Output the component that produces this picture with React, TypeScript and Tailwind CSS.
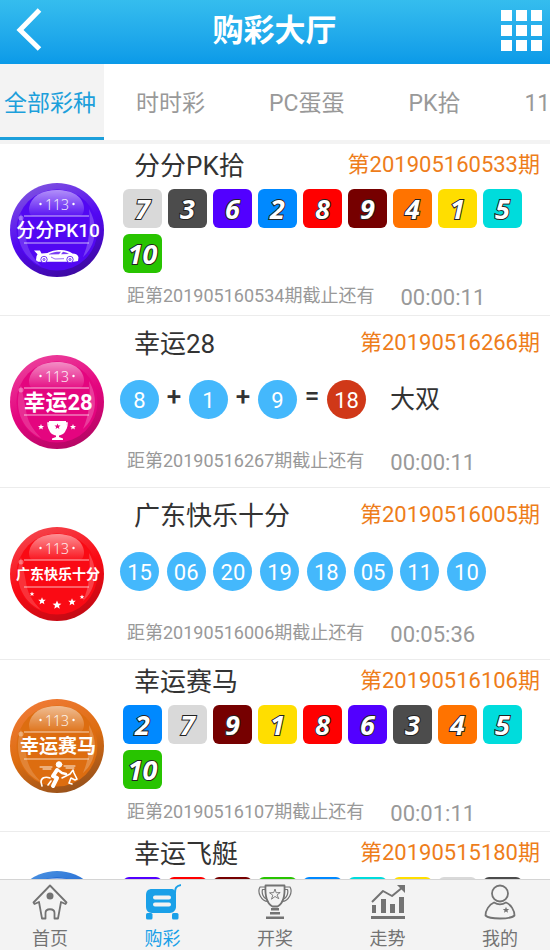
import React from 'react';

type Draw =
  | { kind: 'tiles'; numbers: number[] }
  | { kind: 'sum'; parts: string[]; total: string; result: string }
  | { kind: 'balls'; numbers: string[] };

type Theme = 'purple' | 'pink' | 'red' | 'orange' | 'blue';

interface Lottery {
  name: string;
  theme: Theme;
  badgeSize: number;
  issue: string;
  next: string;
  time: string;
  draw: Draw;
}

const lotteries: Lottery[] = [
  { name: '分分PK拾', theme: 'purple', badgeSize: 19, issue: '201905160533', next: '201905160534', time: '00:00:11', draw: { kind: 'tiles', numbers: [7, 3, 6, 2, 8, 9, 4, 1, 5, 10] } },
  { name: '幸运28', theme: 'pink', badgeSize: 22, issue: '20190516266', next: '20190516267', time: '00:00:11', draw: { kind: 'sum', parts: ['8', '1', '9'], total: '18', result: '大双' } },
  { name: '广东快乐十分', theme: 'red', badgeSize: 14, issue: '20190516005', next: '20190516006', time: '00:05:36', draw: { kind: 'balls', numbers: ['15', '06', '20', '19', '18', '05', '11', '10'] } },
  { name: '幸运赛马', theme: 'orange', badgeSize: 19, issue: '20190516106', next: '20190516107', time: '00:01:11', draw: { kind: 'tiles', numbers: [2, 7, 9, 1, 8, 6, 3, 4, 5, 10] } },
  { name: '幸运飞艇', theme: 'blue', badgeSize: 19, issue: '20190515180', next: '20190515181', time: '00:01:11', draw: { kind: 'tiles', numbers: [6, 8, 9, 10, 2, 5, 1, 7, 3, 4] } },
];

const tileColors: Record<number, string> = {
  1: 'bg-[#ffde00]',
  2: 'bg-[#0089ff]',
  3: 'bg-[#4c4c4c]',
  4: 'bg-[#ff7300]',
  5: 'bg-[#00dcdc]',
  6: 'bg-[#5200ff]',
  7: 'bg-[#d9d9d9]',
  8: 'bg-[#ff0000]',
  9: 'bg-[#760000]',
  10: 'bg-[#28c400]',
};

const themes: Record<Theme, { light: string; base: string; dark: string }> = {
  purple: { light: '#7f52e0', base: '#5208f2', dark: '#3c0a9c' },
  pink: { light: '#ec3f9c', base: '#e4057f', dark: '#b30763' },
  red: { light: '#f5444c', base: '#fa0a14', dark: '#c00a14' },
  orange: { light: '#ef7a35', base: '#dd6d10', dark: '#94501c' },
  blue: { light: '#4a90e0', base: '#0a55cc', dark: '#08409c' },
};

const star = 'M0-4 1.1-1.3 4-1.2 1.8.6 2.5 3.4 0 1.8-2.5 3.4-1.8.6-4-1.2-1.1-1.3Z';

function Emblem({ theme }: { theme: Theme }) {
  if (theme === 'purple') {
    return (
      <g>
        <path fill="#fff" d="M24 67.500h6l1.500 3 6-.5c4-2 7-3 13-3 5 0 9 1.500 12 3.500 4 .5 5.500 1.500 6 4l-.5 3.500-4 .800H28l-2-1.500.500-4 1-2Z" />
        <path d="M39 71c4-2 8-2.500 12-2.300l-2 2.500-10 .3Zm14-2.200c3 .4 5 1.600 6 2.200l-8 .3Z" fill="#7a3df5" />
        <g fill="#fff" stroke="#5208f2" strokeWidth="0.800">
          <circle cx="34" cy="76.500" r="3.200" /><circle cx="60" cy="76.500" r="3.200" />
          <circle cx="34" cy="76.500" r="1" /><circle cx="60" cy="76.500" r="1" />
        </g>
        <path d="M41 74l4 2 9-.3" fill="none" stroke="#5208f2" strokeWidth="0.600" />
      </g>
    );
  }
  if (theme === 'pink') {
    return (
      <g fill="#fff">
        <path d="M39 66h17v7c0 5-4 7-7 7.500V82l4 1.500V85H42v-1.500l4-1.500v-1.500c-3-.5-7-2.500-7-7.500Z" />
        <path d="M40 68h-2c0 4 1 7 4 8m13-8h2c0 4-1 7-4 8" fill="none" stroke="#fff" strokeWidth="1.500" />
        <path d={star} transform="translate(31 72) scale(.75)" />
        <path d={star} transform="translate(63 72) scale(.75)" />
        <path d={star} fill="#e4057f" transform="translate(47.500 71.500) scale(.75)" />
      </g>
    );
  }
  if (theme === 'red') {
    return (
      <g fill="#fff">
        <path d={star} transform="translate(22 67) scale(.6)" />
        <path d={star} transform="translate(32 74) scale(.95)" />
        <path d={star} transform="translate(47 78) scale(1.1)" />
        <path d={star} transform="translate(62 75) scale(.95)" />
        <path d={star} transform="translate(72 70) scale(.6)" />
      </g>
    );
  }
  return (
    <g fill="none" stroke="#fff" strokeLinecap="round" strokeLinejoin="round">
      <circle cx="49" cy="65.500" r="2.800" fill="#fff" />
      <path d="M47 71l-4 6M43 77l4 2-4 8" strokeWidth="4" />
      <path d="M48 71l4 3 4 1" strokeWidth="2.500" />
      <path d="M40 79c-5-2-9 0-9 4l1 4m9-5-3 4m14-7 8-4 3-4 1 3 3 6-2 1-4-2-2 5 3 1" strokeWidth="1.600" />
      <path d="M30 68h12m-9 2h8m13-3h11m-9 2h8" strokeWidth="0.900" />
    </g>
  );
}

function Badge({ lottery }: { lottery: Lottery }) {
  const { theme, badgeSize } = lottery;
  const c = themes[theme];
  const label = lottery.name.replace('拾', '10');
  return (
    <svg viewBox="0 0 94 94" className="size-[94px] shrink-0" role="img" aria-label={label}>
      <defs>
        <linearGradient id={`rim-${theme}`} x1="0.300" y1="0" x2="0.700" y2="1">
          <stop offset="0" stopColor={c.light} />
          <stop offset="0.500" stopColor={c.base} />
          <stop offset="1" stopColor={c.dark} />
        </linearGradient>
        <linearGradient id={`shine-${theme}`} x1="0" y1="0" x2="0" y2="1">
          <stop offset="0" stopColor="#fff" stopOpacity="0.550" />
          <stop offset="1" stopColor="#fff" stopOpacity="0.050" />
        </linearGradient>
      </defs>
      <circle cx="47" cy="47" r="47" fill={`url(#rim-${theme})`} />
      <circle cx="47" cy="47" r="40.500" fill={c.base} />
      <path d="M11 30c-8 22 0 44 20 53-9-9-14-18-15-28Z" fill="#fff" opacity="0.160" />
      <path d="M79 26c10 17 7 37-6 48 6-14 8-30 6-48Z" fill="#fff" opacity="0.220" />
      <path d="M19 25C21 13 32 7 47 7s26 6 27 18c0 5-2 8-5 8H24c-4 0-5-3-5-8Z" fill={`url(#shine-${theme})`} />
      <circle cx="11" cy="35" r="2.500" fill="#fff" opacity="0.350" />
      <path d="M14 33h65M14 60h65" stroke="#fff" strokeWidth="0.900" opacity="0.800" />
      <text x="47" y="27" textAnchor="middle" fontSize="14" fill="#fff" opacity="0.900" className="font-['Noto_Sans',sans-serif] font-light">113</text>
      <circle cx="30.500" cy="21" r="1.200" fill="#fff" /><circle cx="63.500" cy="21" r="1.200" fill="#fff" />
      <text x="48" y={47 + badgeSize * 0.36} textAnchor="middle" fontSize={badgeSize} fill="#fff" className={`font-['Roboto','Noto_Sans_CJK_SC',sans-serif] ${theme === 'purple' ? 'font-medium' : 'font-bold'}`}>{label}</text>
      <Emblem theme={theme} />
    </svg>
  );
}

function Ball({ value, red = false }: { value: string; red?: boolean }) {
  return (
    <span className={`flex size-[39px] items-center justify-center rounded-full pt-0.5 text-[22px] leading-none text-white ${red ? 'bg-[#d03818]' : 'bg-[#44b8fc]'}`}>
      {value}
    </span>
  );
}

function DrawResult({ draw }: { draw: Draw }) {
  if (draw.kind === 'tiles') {
    return (
      <div className="mt-[5px] mb-[9px] flex flex-wrap gap-[6px] pl-[3px]">
        {draw.numbers.map((n) => (
          <span
            key={n}
            className={`flex size-[39px] items-center justify-center rounded-[6px] font-['Open_Sans',sans-serif] text-[27px] leading-none font-bold text-white italic [paint-order:stroke_fill] [-webkit-text-stroke:2px_#222] ${tileColors[n]}`}
          >
            {n}
          </span>
        ))}
      </div>
    );
  }
  if (draw.kind === 'balls') {
    return (
      <div className="mt-[18px] mb-[28px] flex max-w-[366px] justify-between">
        {draw.numbers.map((n) => (
          <Ball key={n} value={n} />
        ))}
      </div>
    );
  }
  return (
    <div className="mt-[18px] mb-[28px] flex items-center text-[#333]">
      {draw.parts.map((n, i) => (
        <React.Fragment key={n}>
          <Ball value={n} />
          <span className="w-[30px] pb-2 text-center text-[26px] leading-none font-medium">{i < draw.parts.length - 1 ? '+' : '='}</span>
        </React.Fragment>
      ))}
      <Ball value={draw.total} red />
      <span className="ml-6 text-[25px] leading-none">{draw.result}</span>
    </div>
  );
}

function LotteryRow({ lottery }: { lottery: Lottery }) {
  return (
    <li className="flex min-h-[172px] shrink-0 items-center gap-4 border-b border-[#ececec] pl-[10px]">
      <Badge lottery={lottery} />
      <div className="min-w-0 flex-1 pb-0.5">
        <div className="flex h-9 items-center justify-between pr-[10px] pl-[14px]">
          <h2 className="text-[26px] leading-9 text-[#333]">{lottery.name}</h2>
          <span className="pb-0.5 text-[22px] leading-8 text-[#ee7d1a]">第{lottery.issue}期</span>
        </div>
        <DrawResult draw={lottery.draw} />
        <p className="flex h-7 items-center gap-[26px] pl-[7px] text-[#999]">
          <span className="text-[18px] leading-7">距第{lottery.next}期截止还有</span>
          <time className="pt-1 text-[22px] leading-7">{lottery.time}</time>
        </p>
      </div>
    </li>
  );
}

const tabs = ['时时彩', 'PC蛋蛋', 'PK拾', '11选5'];

const iconProps = {
  viewBox: '0 0 36 36',
  className: 'size-9',
  fill: 'none',
  stroke: 'currentColor',
  strokeWidth: 1.8,
  strokeLinejoin: 'round' as const,
  'aria-hidden': true,
};

const navItems = [
  {
    label: '首页',
    icon: (
      <svg {...iconProps}>
        <path d="M18 1.500 34.500 18.500l-1 1.500-4.500-2-3 16.500h-3.500V29c0-5-9-5-9 0v5.500H10L7 18l-4.500 2-1-1.500Z" />
        <circle cx="18" cy="12" r="3.500" fill="currentColor" stroke="none" />
      </svg>
    ),
  },
  {
    label: '购彩',
    icon: (
      <svg {...iconProps}>
        <path d="M7 5h19c3 0 5 2 5 5v13c0 3-3 6-6 6H7c-4 0-6-3-6-6V11c0-4 2-6 6-6Z" fill="currentColor" stroke="none" />
        <path d="M30 9c0-5 1-7 6-8" strokeWidth="2" />
        <path d="M10 13.500h14M10 20.500h14" stroke="#f3f3f3" strokeWidth="4" strokeLinecap="round" />
        <rect x="1" y="29" width="6.500" height="6.500" rx="1.500" fill="currentColor" stroke="none" />
        <rect x="27" y="29" width="6.500" height="6.500" rx="1.500" fill="currentColor" stroke="none" />
      </svg>
    ),
  },
  {
    label: '开奖',
    icon: (
      <svg {...iconProps}>
        <path d="M8.500 1.500h19c.5 9-1 18-7 21h-5c-6-3-7.500-12-7-21Z" />
        <path d="M8.500 3H3c-3 5 1 14 8 14.500l-1-2C6 14 4.500 9 5.500 5.500h3M27.500 3H33c3 5-1 14-8 14.500l1-2c4-1.500 5.500-6.500 4.500-10h-3" strokeWidth="1.200" />
        <path d="m18 5 1.200 3.800 4-.3-3.200 2.500 1.800 3.700L18 12.500l-3.500 2.700 1.300-4-3.300-2.400 4.200-.2Z" strokeWidth="0.900" />
        <path d="M14 24h8v2.500h-8ZM13 28h10v2.500H13ZM9 32.500h18V35H9Z" fill="currentColor" stroke="none" />
      </svg>
    ),
  },
  {
    label: '走势',
    icon: (
      <svg {...iconProps}>
        <path d="M2 18 13 7l9 5L33 3" strokeWidth="2" />
        <path d="M27 1h8v8Z" fill="currentColor" stroke="none" />
        <path d="M2 21h4v8H2Zm9-6h5v14h-5Zm9 5h5v9h-5Zm9-7h5v16h-5ZM1 32h34v3H1Z" fill="currentColor" stroke="none" />
      </svg>
    ),
  },
  {
    label: '我的',
    icon: (
      <svg {...iconProps}>
        <circle cx="18" cy="9.500" r="8" />
        <path d="M12 18.500c-5 2-8.500 8-8.500 13 4 4 25 4 29 0 0-5-3.500-11-8.500-13-4 2.500-8 2.500-12 0Z" />
        <path d={star} transform="translate(24 26) scale(.8)" fill="currentColor" stroke="none" />
      </svg>
    ),
  },
];

export default function App() {
  return (
    <div className="flex h-screen flex-col overflow-hidden bg-white font-['Roboto','Noto_Sans_CJK_SC',sans-serif]">
      <header className="flex h-16 shrink-0 items-center justify-between bg-gradient-to-b from-[#35bdee] to-[#0a9ae8] pr-2 pb-1 pl-4 text-white">
        <button type="button" aria-label="返回" className="flex w-8">
          <svg viewBox="0 0 26 44" className="h-11 w-[26px]" fill="none" stroke="currentColor" strokeWidth="5" aria-hidden="true">
            <path d="M23.500 2 4 22l19.500 19" />
          </svg>
        </button>
        <h1 className="text-[31px] leading-none font-bold">购彩大厅</h1>
        <button type="button" aria-label="菜单" className="grid grid-cols-3 gap-1">
          {Array.from({ length: 9 }, (_, i) => (
            <span key={i} className="size-[11px] bg-white" />
          ))}
        </button>
      </header>

      <div role="tablist" className="flex h-20 shrink-0 overflow-hidden border-b-4 border-[#f3f3f3] text-[23px] whitespace-nowrap text-[#999]">
        <button type="button" role="tab" aria-selected="true" className="shrink-0 border-b-3 border-[#1c9fdb] bg-[#f3f3f3] pt-2 pr-2 pl-1 text-[#1c9fdb]">
          全部彩种
        </button>
        {tabs.map((tab) => (
          <button key={tab} type="button" role="tab" aria-selected="false" className="shrink-0 px-8 pt-1">
            {tab}
          </button>
        ))}
      </div>

      <ul className="flex min-h-0 flex-1 flex-col overflow-hidden">
        {lotteries.map((lottery) => (
          <LotteryRow key={lottery.name} lottery={lottery} />
        ))}
      </ul>

      <nav className="flex h-[71px] shrink-0 justify-between border-t border-[#d4d4d4] bg-[#f3f3f3] px-8">
        {navItems.map((item) => (
          <a
            key={item.label}
            href="#"
            aria-current={item.label === '购彩' ? 'page' : undefined}
            className={`flex w-9 flex-col items-center gap-2 pt-1 text-[18px] leading-[22px] ${item.label === '购彩' ? 'text-[#1aa0e8]' : 'text-[#737373]'}`}
          >
            {item.icon}
            {item.label}
          </a>
        ))}
      </nav>
    </div>
  );
}
